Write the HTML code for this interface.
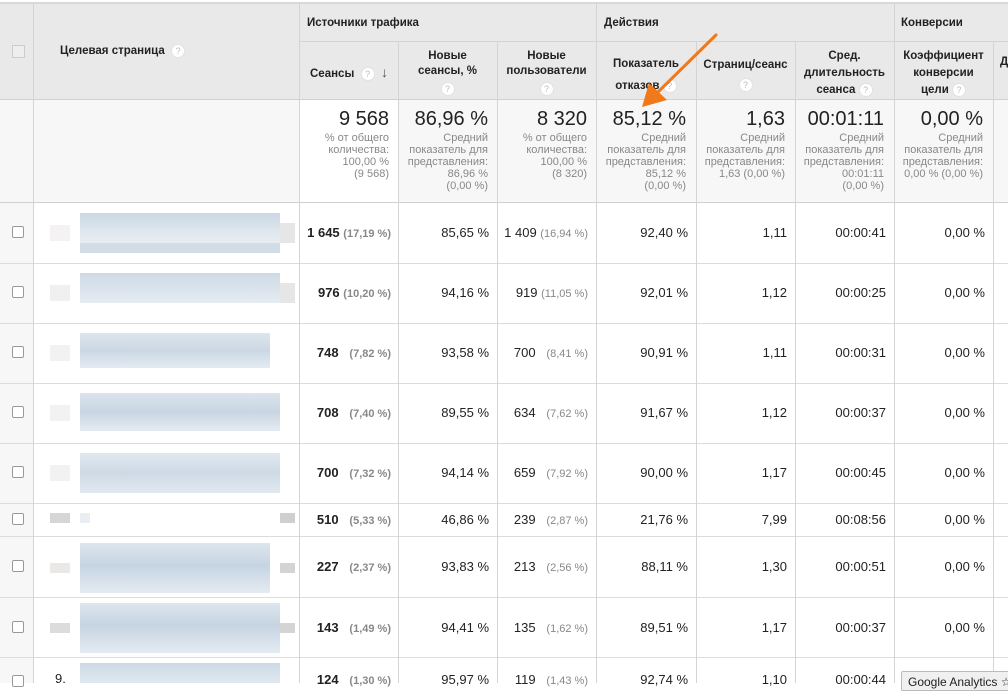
<!DOCTYPE html>
<html><head><meta charset="utf-8"><style>
*{margin:0;padding:0;box-sizing:border-box}
body{width:1008px;height:683px;overflow:hidden;background:#fff;font-family:"Liberation Sans",Arial,sans-serif;color:#222;position:relative}
.a{position:absolute}
.vl{position:absolute;top:3px;bottom:0;width:1px;background:#d4d4d4}
.hl{position:absolute;left:0;right:0;height:1px;background:#dcdcdc}
.h{position:absolute;font-size:11.5px;font-weight:bold;color:#222;line-height:15px;text-align:center}
.q{display:inline-block;width:14px;height:14px;border-radius:50%;background:#fff;color:#bbb;font-size:9px;line-height:13px;text-align:center;font-weight:normal;vertical-align:middle;border:1px solid #e2e2e2}
.big{position:absolute;font-size:20px;color:#222;text-align:right}
.sm{position:absolute;font-size:11px;color:#888;text-align:right;line-height:12px}
.v{position:absolute;font-size:13px;text-align:right;color:#222}
.cb{position:absolute;left:12px;width:12px;height:12px;border:1px solid #999;border-radius:2px;background:#fff}
.s{font-weight:bold}
.p{font-size:11px;color:#888;font-weight:bold}
.bl{position:absolute;background:#c9d6e3;opacity:.75}
</style></head><body>
<div class="a" style="left:0;top:3px;width:1008px;height:97px;background:#e9e9e9"></div>
<div class="a" style="left:0;top:100px;width:1008px;height:102px;background:#f7f7f7"></div>
<div class="a" style="left:299px;top:100px;width:99px;height:102px;background:#fff"></div>
<div class="a" style="left:0;top:202px;width:33px;height:481px;background:#f7f7f7"></div>
<div class="a" style="left:0;top:2px;width:1008px;height:2px;background:#d8d8d8"></div>
<div class="a" style="left:299px;top:41px;width:709px;height:1px;background:#d4d4d4"></div>
<div class="hl" style="top:99px;background:#d0d0d0"></div>
<div class="hl" style="top:202px;background:#d0d0d0"></div>
<div class="hl" style="top:263px"></div><div class="hl" style="top:323px"></div><div class="hl" style="top:383px"></div><div class="hl" style="top:443px"></div><div class="hl" style="top:503px"></div><div class="hl" style="top:536px"></div><div class="hl" style="top:597px"></div><div class="hl" style="top:657px"></div>
<div class="vl" style="left:33px"></div><div class="vl" style="left:299px"></div>
<div class="vl" style="left:398px;top:41px"></div><div class="vl" style="left:497px;top:41px"></div>
<div class="vl" style="left:596px"></div><div class="vl" style="left:696px;top:41px"></div><div class="vl" style="left:795px;top:41px"></div>
<div class="vl" style="left:894px"></div><div class="vl" style="left:993px;top:41px"></div>
<div class="a" style="left:12px;top:45px;width:13px;height:13px;border:1px solid #ccc;background:#eee"></div>
<div class="h" style="left:60px;top:44px;text-align:left">Целевая страница &nbsp;<span class="q">?</span></div>
<div class="h" style="left:307px;top:16px;text-align:left">Источники трафика</div>
<div class="h" style="left:604px;top:16px;text-align:left">Действия</div>
<div class="h" style="left:901px;top:16px;text-align:left">Конверсии</div>
<div class="h" style="left:310px;top:65px;text-align:left">Сеансы &nbsp;<span class="q">?</span> &nbsp;<span style="color:#555;font-size:14px">↓</span></div>
<div class="h" style="left:398px;top:49px;width:99px">Новые<br>сеансы, %<br><span class="q" style="margin-top:3px">?</span></div>
<div class="h" style="left:497px;top:49px;width:99px">Новые<br>пользователи<br><span class="q" style="margin-top:3px">?</span></div>
<div class="h" style="left:596px;top:53px;width:100px;line-height:22px">Показатель<br>отказов <span class="q">?</span></div>
<div class="h" style="left:696px;top:55px;width:99px;line-height:20px">Страниц/сеанс<br><span class="q">?</span></div>
<div class="h" style="left:795px;top:48px;width:99px;line-height:17px">Сред.<br>длительность<br>сеанса <span class="q">?</span></div>
<div class="h" style="left:894px;top:48px;width:99px;line-height:17px">Коэффициент<br>конверсии<br>цели <span class="q">?</span></div>
<div class="h" style="left:1000px;top:55px;text-align:left">Д</div>
<div class="big" style="left:299px;width:90px;top:108px">9 568</div>
<div class="sm" style="left:299px;width:90px;top:132px">% от общего<br>количества:<br>100,00 %<br>(9 568)</div>
<div class="big" style="left:398px;width:90px;top:108px">86,96 %</div>
<div class="sm" style="left:398px;width:90px;top:132px">Средний<br>показатель для<br>представления:<br>86,96 %<br>(0,00 %)</div>
<div class="big" style="left:497px;width:90px;top:108px">8 320</div>
<div class="sm" style="left:497px;width:90px;top:132px">% от общего<br>количества:<br>100,00 %<br>(8 320)</div>
<div class="big" style="left:596px;width:90px;top:108px">85,12 %</div>
<div class="sm" style="left:596px;width:90px;top:132px">Средний<br>показатель для<br>представления:<br>85,12 %<br>(0,00 %)</div>
<div class="big" style="left:696px;width:89px;top:108px">1,63</div>
<div class="sm" style="left:696px;width:89px;top:132px">Средний<br>показатель для<br>представления:<br>1,63 (0,00 %)</div>
<div class="big" style="left:795px;width:89px;top:108px">00:01:11</div>
<div class="sm" style="left:795px;width:89px;top:132px">Средний<br>показатель для<br>представления:<br>00:01:11<br>(0,00 %)</div>
<div class="big" style="left:894px;width:89px;top:108px">0,00 %</div>
<div class="sm" style="left:894px;width:89px;top:132px">Средний<br>показатель для<br>представления:<br>0,00 % (0,00 %)</div>
<div class="cb" style="top:226px"></div><div class="cb" style="top:286px"></div><div class="cb" style="top:346px"></div><div class="cb" style="top:406px"></div><div class="cb" style="top:466px"></div><div class="cb" style="top:513px"></div><div class="cb" style="top:560px"></div><div class="cb" style="top:621px"></div><div class="cb" style="top:675px"></div>
<div class="bl" style="left:80px;top:213px;width:200px;height:40px;background:linear-gradient(#b8c9da,#d6e0ea 50%,#dfe6ee 75%,#c2d0de 75%)"></div>
<div class="bl" style="left:80px;top:273px;width:200px;height:30px;background:linear-gradient(#bccddc,#dde6ee)"></div>
<div class="bl" style="left:80px;top:333px;width:190px;height:35px;background:linear-gradient(#d2dde8,#b9cadb 50%,#dbe4ed)"></div>
<div class="bl" style="left:80px;top:393px;width:200px;height:38px;background:linear-gradient(#d0dbe6,#b7c8d9 50%,#dbe4ed)"></div>
<div class="bl" style="left:80px;top:453px;width:200px;height:40px;background:linear-gradient(#d6e0ea,#bccddc 50%,#d8e2eb)"></div>
<div class="bl" style="left:80px;top:513px;width:10px;height:10px;background:#e3e8ef"></div>
<div class="bl" style="left:80px;top:543px;width:190px;height:50px;background:linear-gradient(#d2dde8,#b3c6d8 45%,#dbe4ed)"></div>
<div class="bl" style="left:80px;top:603px;width:200px;height:50px;background:linear-gradient(#d2dde8,#b3c6d8 45%,#dbe4ed)"></div>
<div class="bl" style="left:80px;top:663px;width:200px;height:20px;background:linear-gradient(#bccddc,#d6e0ea)"></div>
<div class="a" style="left:50px;top:225px;width:20px;height:16px;background:#f4f2f2"></div>
<div class="a" style="left:50px;top:285px;width:20px;height:16px;background:#f0f0f0"></div>
<div class="a" style="left:50px;top:345px;width:20px;height:16px;background:#f2f2f2"></div>
<div class="a" style="left:50px;top:405px;width:20px;height:16px;background:#f2f2f2"></div>
<div class="a" style="left:50px;top:465px;width:20px;height:16px;background:#f2f2f2"></div>
<div class="a" style="left:50px;top:513px;width:20px;height:10px;background:#d6d6d6"></div>
<div class="a" style="left:50px;top:563px;width:20px;height:10px;background:#ebe8e8"></div>
<div class="a" style="left:50px;top:623px;width:20px;height:10px;background:#dcdcdc"></div>
<div class="a" style="left:280px;top:223px;width:15px;height:20px;background:#e6e6e6"></div>
<div class="a" style="left:280px;top:283px;width:15px;height:20px;background:#e6e6e6"></div>
<div class="a" style="left:280px;top:513px;width:15px;height:10px;background:#cfcfcf"></div>
<div class="a" style="left:280px;top:563px;width:15px;height:10px;background:#d4d4d4"></div>
<div class="a" style="left:280px;top:623px;width:15px;height:10px;background:#d4d4d4"></div>
<div class="a" style="left:55px;top:671px;font-size:13px">9.</div>

<div class="v" style="left:299px;width:92px;top:225px"><span class="s">1 645</span> <span class="p">(17,19 %)</span></div>
<div class="v" style="left:299px;width:92px;top:285px"><span class="s">976</span> <span class="p">(10,20 %)</span></div>
<div class="v" style="left:299px;width:92px;top:345px"><span class="s">748</span> &nbsp; <span class="p">(7,82 %)</span></div>
<div class="v" style="left:299px;width:92px;top:405px"><span class="s">708</span> &nbsp; <span class="p">(7,40 %)</span></div>
<div class="v" style="left:299px;width:92px;top:465px"><span class="s">700</span> &nbsp; <span class="p">(7,32 %)</span></div>
<div class="v" style="left:299px;width:92px;top:512px"><span class="s">510</span> &nbsp; <span class="p">(5,33 %)</span></div>
<div class="v" style="left:299px;width:92px;top:559px"><span class="s">227</span> &nbsp; <span class="p">(2,37 %)</span></div>
<div class="v" style="left:299px;width:92px;top:620px"><span class="s">143</span> &nbsp; <span class="p">(1,49 %)</span></div>
<div class="v" style="left:299px;width:92px;top:672px"><span class="s">124</span> &nbsp; <span class="p">(1,30 %)</span></div>

<div class="v" style="left:398px;width:91px;top:225px">85,65 %</div>
<div class="v" style="left:398px;width:91px;top:285px">94,16 %</div>
<div class="v" style="left:398px;width:91px;top:345px">93,58 %</div>
<div class="v" style="left:398px;width:91px;top:405px">89,55 %</div>
<div class="v" style="left:398px;width:91px;top:465px">94,14 %</div>
<div class="v" style="left:398px;width:91px;top:512px">46,86 %</div>
<div class="v" style="left:398px;width:91px;top:559px">93,83 %</div>
<div class="v" style="left:398px;width:91px;top:620px">94,41 %</div>
<div class="v" style="left:398px;width:91px;top:672px">95,97 %</div>

<div class="v" style="left:497px;width:91px;top:225px">1 409 <span class="p" style="font-weight:normal">(16,94 %)</span></div>
<div class="v" style="left:497px;width:91px;top:285px">919 <span class="p" style="font-weight:normal">(11,05 %)</span></div>
<div class="v" style="left:497px;width:91px;top:345px">700 &nbsp; <span class="p" style="font-weight:normal">(8,41 %)</span></div>
<div class="v" style="left:497px;width:91px;top:405px">634 &nbsp; <span class="p" style="font-weight:normal">(7,62 %)</span></div>
<div class="v" style="left:497px;width:91px;top:465px">659 &nbsp; <span class="p" style="font-weight:normal">(7,92 %)</span></div>
<div class="v" style="left:497px;width:91px;top:512px">239 &nbsp; <span class="p" style="font-weight:normal">(2,87 %)</span></div>
<div class="v" style="left:497px;width:91px;top:559px">213 &nbsp; <span class="p" style="font-weight:normal">(2,56 %)</span></div>
<div class="v" style="left:497px;width:91px;top:620px">135 &nbsp; <span class="p" style="font-weight:normal">(1,62 %)</span></div>
<div class="v" style="left:497px;width:91px;top:672px">119 &nbsp; <span class="p" style="font-weight:normal">(1,43 %)</span></div>

<div class="v" style="left:596px;width:92px;top:225px">92,40 %</div>
<div class="v" style="left:596px;width:92px;top:285px">92,01 %</div>
<div class="v" style="left:596px;width:92px;top:345px">90,91 %</div>
<div class="v" style="left:596px;width:92px;top:405px">91,67 %</div>
<div class="v" style="left:596px;width:92px;top:465px">90,00 %</div>
<div class="v" style="left:596px;width:92px;top:512px">21,76 %</div>
<div class="v" style="left:596px;width:92px;top:559px">88,11 %</div>
<div class="v" style="left:596px;width:92px;top:620px">89,51 %</div>
<div class="v" style="left:596px;width:92px;top:672px">92,74 %</div>

<div class="v" style="left:696px;width:91px;top:225px">1,11</div>
<div class="v" style="left:696px;width:91px;top:285px">1,12</div>
<div class="v" style="left:696px;width:91px;top:345px">1,11</div>
<div class="v" style="left:696px;width:91px;top:405px">1,12</div>
<div class="v" style="left:696px;width:91px;top:465px">1,17</div>
<div class="v" style="left:696px;width:91px;top:512px">7,99</div>
<div class="v" style="left:696px;width:91px;top:559px">1,30</div>
<div class="v" style="left:696px;width:91px;top:620px">1,17</div>
<div class="v" style="left:696px;width:91px;top:672px">1,10</div>

<div class="v" style="left:795px;width:91px;top:225px">00:00:41</div>
<div class="v" style="left:795px;width:91px;top:285px">00:00:25</div>
<div class="v" style="left:795px;width:91px;top:345px">00:00:31</div>
<div class="v" style="left:795px;width:91px;top:405px">00:00:37</div>
<div class="v" style="left:795px;width:91px;top:465px">00:00:45</div>
<div class="v" style="left:795px;width:91px;top:512px">00:08:56</div>
<div class="v" style="left:795px;width:91px;top:559px">00:00:51</div>
<div class="v" style="left:795px;width:91px;top:620px">00:00:37</div>
<div class="v" style="left:795px;width:91px;top:672px">00:00:44</div>

<div class="v" style="left:894px;width:91px;top:225px">0,00 %</div>
<div class="v" style="left:894px;width:91px;top:285px">0,00 %</div>
<div class="v" style="left:894px;width:91px;top:345px">0,00 %</div>
<div class="v" style="left:894px;width:91px;top:405px">0,00 %</div>
<div class="v" style="left:894px;width:91px;top:465px">0,00 %</div>
<div class="v" style="left:894px;width:91px;top:512px">0,00 %</div>
<div class="v" style="left:894px;width:91px;top:559px">0,00 %</div>
<div class="v" style="left:894px;width:91px;top:620px">0,00 %</div>

<div class="a" style="left:901px;top:671px;width:110px;height:20px;background:#f0f0f0;border:1px solid #bbb;border-radius:2px;font-size:12px;padding:3px 0 0 6px;color:#222;white-space:nowrap">Google Analytics ☆</div>

<svg class="a" style="left:0;top:0" width="1008" height="683">
<line x1="716" y1="35" x2="656" y2="94" stroke="#f07a1a" stroke-width="3" stroke-linecap="round"/>
<polygon points="642,107 649,83 667,100" fill="#f07a1a"/>
</svg>
</body></html>
